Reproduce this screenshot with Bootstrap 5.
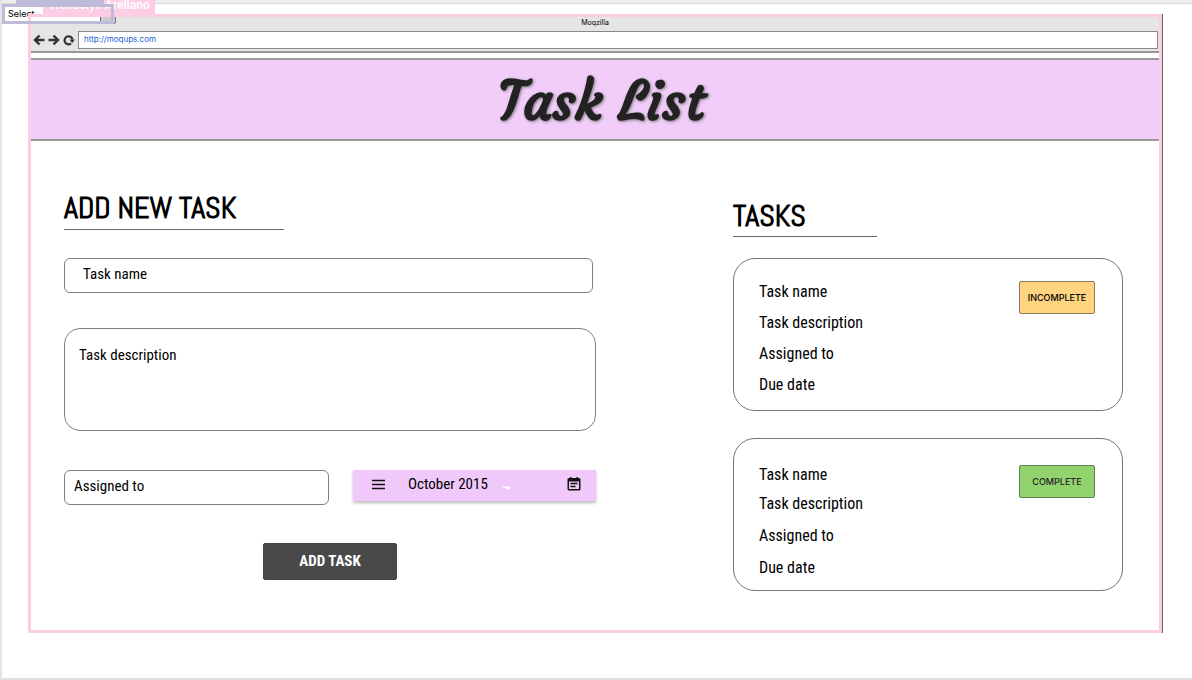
<!DOCTYPE html>
<html lang="en">
<head>
<meta charset="utf-8">
<meta name="viewport" content="width=device-width, initial-scale=1">
<title>Task List</title>
<link rel="stylesheet" href="https://cdn.jsdelivr.net/npm/bootstrap@5.3.0/dist/css/bootstrap.min.css">
<style>
  body { font-family: "Roboto Condensed", "Liberation Sans", sans-serif; font-size: 16px; line-height: 20px; color: #000; background: #fff; min-height: 100vh; border-left: 2px solid #e4e4e4; border-bottom: 2px solid #e0e0e0; }
  .canvas-edge { height: 4px; background: #eee; border-bottom: 1px solid #d9d9d9; }
  .page-area { padding: 10px 30px 45px 26px; }
  .board { padding: 3px 3px 42px; box-shadow: 1px 0 0 #666; }

  /* selection frames and name tags of the two people on the canvas */
  .peer-frame { inset: 0; border: 3px solid #fccde5; z-index: 2; pointer-events: none; }
  .peer-tag { top: -14px; left: 15px; height: 14px; background: #fccde5; color: #fff; font: 600 12px/12px Roboto, sans-serif; padding: 0 5px 0 6px; z-index: 2; }
  .peer-tag span { display: block; margin-top: -1px; }
  .select-layer { top: 4px; left: 0; width: 114px; height: 20px; z-index: 1; }
  .select-frame { top: 4px; left: 0; width: 112px; height: 20px; border: 3px solid #bebada; z-index: 3; pointer-events: none; }
  .select-tag { top: 0; left: 14px; width: 88px; height: 5px; background: #bebada; z-index: 3; }
  .select-layer select { appearance: none; border: 1px solid #777; border-radius: 2px; background: linear-gradient(to left, #ccc 14px, #666 14px, #666 15px, #fff 15px); font: 9px/12px Inter, sans-serif; padding: 0 5px; color: #000; }

  .chrome { background: #e5e5e5; border-bottom: 2px solid #999; font-family: Inter, sans-serif; }
  .chrome-title { font-size: 7px; line-height: 12px; padding-bottom: 2px; }
  .chrome-row { padding: 0 1px 2px 2px; gap: 3px; }
  .chrome-row button { width: 12px; height: 12px; }
  svg { display: block; }
  .address { height: 18px; border: 1px solid #888; font: 8px/12px Inter, sans-serif; color: #1a5fd8; padding: 0 5px 2px; background: #fff; min-width: 0; }

  .hero { margin-top: 5px; background: #f2cdfa; border-top: 2px solid #999; border-bottom: 2px solid #999; padding: 3px 0 0 12px; }
  .hero h1 { font: 700 54px/76px Courgette, Lato, cursive; color: #222; text-shadow: 1px 1px 3px #777; margin: 0; }

  .workspace { padding: 0 36px 0 33px; display: grid; grid-template-columns: 532fr 390fr; column-gap: 137px; }
  .heading { font: 700 30px/36px Abel, "Roboto Condensed", sans-serif; border-bottom: 1px solid #666; }
  .form-heading { width: 220px; margin: 49px 0 28px; padding-bottom: 3px; }
  .list-heading { width: 144px; margin: 57px 0 21px; padding-bottom: 2px; }
  .field { border: 1px solid #808080; padding: 0 9px 3px; height: 35px; border-radius: 6px; background: #fff; font-size: 15px; color: #000; min-width: 0; }
  .field::placeholder { color: #000; opacity: 1; }
  .name-row { padding-right: 3px; }
  .name-row .field { padding-left: 18px; }
  .desc-row .field { height: 103px; border-radius: 16px; padding: 16px 14px; resize: none; display: block; margin: 35px 0 39px; }
  .pair { display: grid; grid-template-columns: 265fr 243fr; column-gap: 24px; }
  .picker { background: #f0c8fa; box-shadow: 0 2px 3px #bbb; height: 31px; padding: 0 14px 3px 17px; border: 0; font-size: 15px; }
  .picker-month { margin-left: 22px; }
  .submit { background: #494949; color: #fff; border: 1px solid #444; border-radius: 2px; font-weight: 700; font-size: 15px; width: 134px; height: 37px; margin-top: 38px; padding: 0 0 2px; }

  .tasks { gap: 27px; }
  .task { border: 1px solid #777; border-radius: 22px; height: 153px; padding: 22px 27px 0 25px; }
  .task ul { gap: 11px; padding-top: 1px; }
  .task-done { padding-top: 26px; }
  .task-done ul { padding-top: 0; }
  .task-done li:nth-child(2) { margin: -2px 0 1px; }
  .task-done li:nth-child(4) { margin-top: 1px; }
  .status { font: 500 9px/12px Inter, sans-serif; width: 76px; height: 33px; border: 1px solid #8a7a55; border-radius: 2px; background: #ffd480; padding: 0; color: #000; }
  .status-done { background: #92d36e; border-color: #5f8050; color: #222; }
</style>
</head>
<body class="position-relative">
<div class="canvas-edge"></div>
<div class="select-layer position-absolute">
  <select class="w-100 h-100 d-block" aria-label="Select"><option>Select</option></select>
</div>
<div class="select-tag position-absolute"></div>
<div class="select-frame position-absolute"></div>

<main class="page-area">
  <section class="board position-relative">
    <div class="peer-frame position-absolute"></div>
    <div class="peer-tag position-absolute text-nowrap"><span>Wendolyn Arellano</span></div>

    <div class="chrome">
      <div class="chrome-title text-center">Moqzilla</div>
      <div class="chrome-row d-flex align-items-center">
        <button class="btn p-0 border-0" type="button" aria-label="Back"><svg width="12" height="12" viewBox="0 0 12 12" fill="none" stroke="#333" stroke-width="2.400"><path d="M6.500 1.500 2 6l4.500 4.500M2 6h9.500"/></svg></button>
        <button class="btn p-0 border-0" type="button" aria-label="Forward"><svg width="12" height="12" viewBox="0 0 12 12" fill="none" stroke="#333" stroke-width="2.400"><path d="M5.500 1.500 10 6l-4.500 4.500M10 6H.5"/></svg></button>
        <button class="btn p-0 border-0" type="button" aria-label="Reload"><svg width="12" height="12" viewBox="0 0 12 12"><path d="M8 9.500A4 4 0 1 1 9.500 5.500" fill="none" stroke="#333" stroke-width="2.200"/><path d="M6.500 5.500h5.500L9.200 9z" fill="#333"/></svg></button>
        <input class="address flex-grow-1" type="text" aria-label="Address" value="http://moqups.com">
      </div>
    </div>

    <header class="hero text-center"><h1>Task List</h1></header>

    <div class="workspace">
      <form>
        <h2 class="heading form-heading">ADD NEW TASK</h2>
        <div class="name-row"><input class="field w-100 d-block" type="text" aria-label="Task name" placeholder="Task name"></div>
        <div class="desc-row"><textarea class="field w-100" aria-label="Task description" placeholder="Task description"></textarea></div>
        <div class="pair">
          <input class="field" type="text" aria-label="Assigned to" placeholder="Assigned to">
          <button class="picker d-flex align-items-center" type="button">
            <svg width="16" height="16" viewBox="0 0 16 16" stroke="#111" stroke-width="1.500"><path d="M2 4.500h13M2 8.500h13M2 12.500h13"/></svg>
            <span class="picker-month">October 2015</span>
            <svg class="ms-2" width="16" height="12" viewBox="0 0 16 12"><path d="M5 8.500h9v3.500z" fill="#fff"/></svg>
            <svg class="ms-auto" width="16" height="16" viewBox="0 0 16 16"><path d="M4 2V1h1.500v1h5V1H12v1h1q1.500 0 1.500 1.500V13q0 1.500-1.500 1.500H3Q1.500 14.500 1.500 13V3.500Q1.500 2 3 2zM3 5.500V13h10V5.500z" fill="#111" fill-rule="evenodd"/><path d="M4.500 7.500h7M4.500 10.500h5" stroke="#111" stroke-width="1.300"/></svg>
          </button>
        </div>
        <div class="text-center"><button class="submit" type="button">ADD TASK</button></div>
      </form>

      <section>
        <h2 class="heading list-heading">TASKS</h2>
        <div class="tasks d-flex flex-column">
          <article class="task d-flex justify-content-between align-items-start">
            <ul class="list-unstyled d-flex flex-column mb-0"><li>Task name</li><li>Task description</li><li>Assigned to</li><li>Due date</li></ul>
            <button class="status" type="button">INCOMPLETE</button>
          </article>
          <article class="task task-done d-flex justify-content-between align-items-start">
            <ul class="list-unstyled d-flex flex-column mb-0"><li>Task name</li><li>Task description</li><li>Assigned to</li><li>Due date</li></ul>
            <button class="status status-done" type="button">COMPLETE</button>
          </article>
        </div>
      </section>
    </div>
  </section>
</main>
<script src="https://cdn.jsdelivr.net/npm/bootstrap@5.3.0/dist/js/bootstrap.bundle.min.js"></script>
</body>
</html>
